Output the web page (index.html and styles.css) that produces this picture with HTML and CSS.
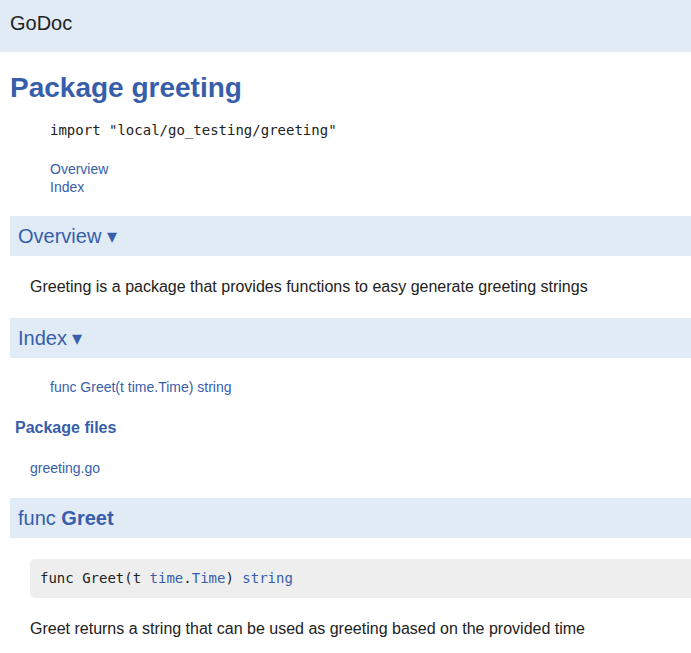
FILE: index.html
```html
<!DOCTYPE html>
<html>
<head>
<meta charset="utf-8">
<title>greeting - GoDoc</title>
<link rel="stylesheet" href="styles.css">
</head>
<body>
<div class="topbar">GoDoc</div>
<div class="page">
  <h1 class="title">Package greeting</h1>
  <div class="import"><code>import "local/go_testing/greeting"</code></div>
  <div class="nav">
    <a href="#overview">Overview</a>
    <a href="#index">Index</a>
  </div>

  <h2 class="section tight" id="overview">Overview ▾</h2>
  <p class="para">Greeting is a package that provides functions to easy generate greeting strings</p>

  <h2 class="section" id="index">Index ▾</h2>
  <div class="index-list">
    <a href="#Greet">func Greet(t time.Time) string</a>
  </div>

  <h3 class="files-title">Package files</h3>
  <div class="files">
    <a href="#">greeting.go</a>
  </div>

  <h2 class="section tight" id="Greet">func <b>Greet</b></h2>
  <pre class="code">func Greet(t <a href="#">time</a>.<a href="#">Time</a>) <a href="#">string</a></pre>
  <p class="para">Greet returns a string that can be used as greeting based on the provided time</p>
</div>
</body>
</html>
```

FILE: styles.css
```css
html, body {
  margin: 0;
  padding: 0;
  background: #fff;
  overflow-x: hidden;
}
body {
  font-family: "Liberation Sans", Arial, sans-serif;
  color: #222;
  line-height: 1.3;
}
a {
  color: #375EAB;
  text-decoration: none;
}
.topbar {
  height: 52px;
  box-sizing: border-box;
  background: #E0EBF5;
  font-size: 20px;
  padding: 10px 0 0 10px;
  color: #222;
}
.page {
  padding-left: 10px;
  margin-right: -40px;
}
.title {
  margin: 18px 0 0 0;
  font-size: 28px;
  font-weight: bold;
  color: #375EAB;
  line-height: 1.3;
}
.import {
  margin: 14px 0 0 40px;
}
.import code {
  font-family: "DejaVu Sans Mono", monospace;
  font-size: 14px;
}
.nav {
  margin: 19px 0 0 40px;
  display: flex;
  flex-direction: column;
  font-size: 14px;
}
.section {
  margin: 20px 0 0 0;
  background: #E0EBF5;
  color: #375EAB;
  font-size: 20px;
  font-weight: normal;
  padding: 8px;
  line-height: 1.2;
  height: 24px;
}
.section.tight {
  margin-top: 19px;
}
.section b {
  font-weight: bold;
}
.para {
  margin: 20px 0 0 20px;
  font-size: 16px;
  line-height: 1.4;
}
.index-list {
  margin: 20px 0 0 40px;
  font-size: 14px;
  line-height: 1.4;
}
.files-title {
  margin: 20px 0 0 5px;
  font-size: 16px;
  font-weight: bold;
  color: #375EAB;
  line-height: 1.3;
}
.files {
  margin: 21px 0 0 20px;
  font-size: 14px;
  line-height: 1.4;
}
.code {
  margin: 21px 0 0 20px;
  background: #EEEEEE;
  border-radius: 5px;
  padding: 10px;
  font-family: "DejaVu Sans Mono", monospace;
  font-size: 14px;
  line-height: 19px;
  color: #222;
}
```
